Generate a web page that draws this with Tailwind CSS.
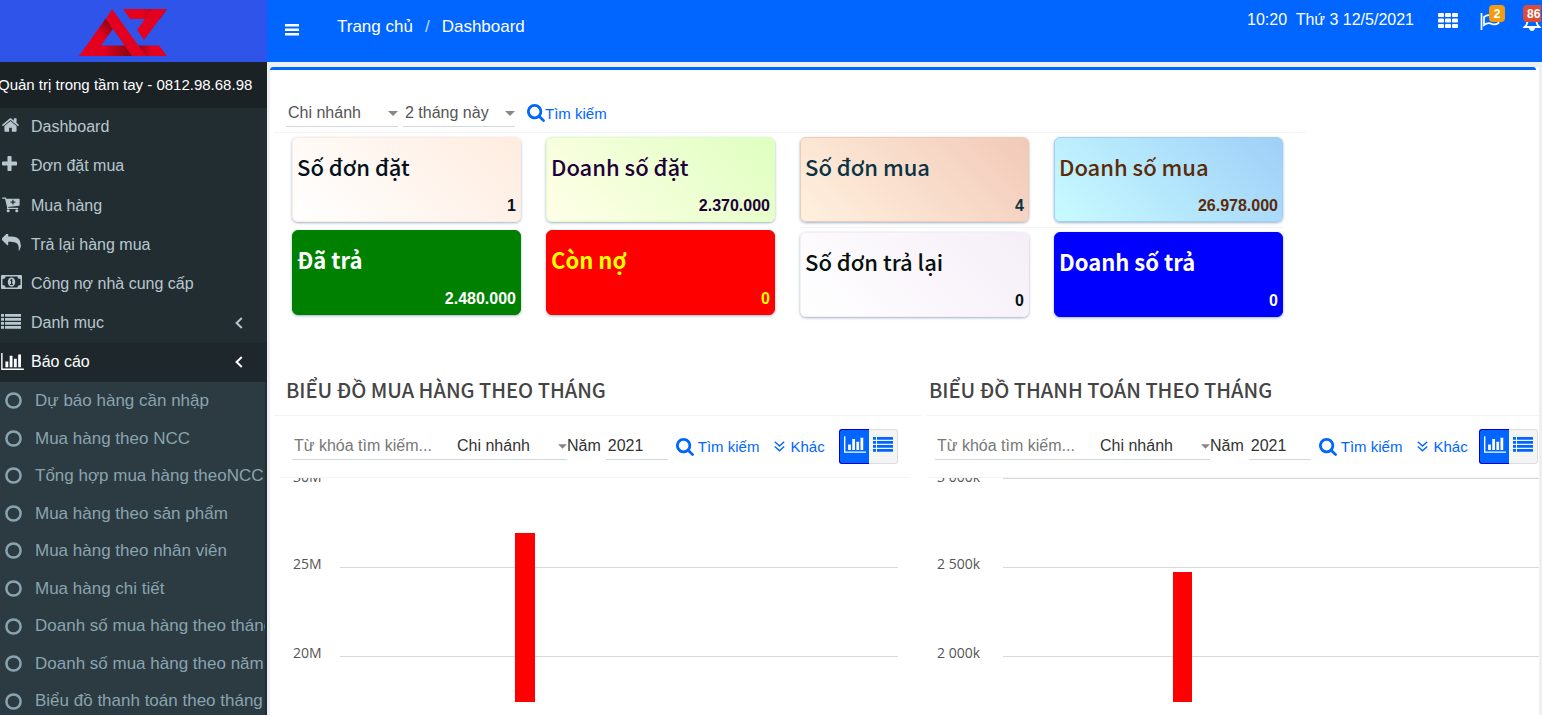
<!DOCTYPE html>
<html lang="vi">
<head>
<meta charset="utf-8">
<meta name="viewport" content="width=device-width, initial-scale=1">
<title>Dashboard</title>
<script src="https://cdn.jsdelivr.net/npm/@tailwindcss/browser@4"></script>
</head>
<body class="flex h-screen flex-col overflow-hidden bg-white font-['Liberation_Sans',Arial,sans-serif] text-base text-[#444]">

<svg class="hidden" aria-hidden="true">
  <symbol id="i-bars" viewBox="0 0 14 13"><path d="M0 1h14v2.500H0zM0 5.500h14V8H0zM0 10h14v2.500H0z" fill="currentColor"/></symbol>
  <symbol id="i-home" viewBox="90 250 1612 1290"><path fill="currentColor" d="M1472 992v480q0 26-19 45t-45 19h-384v-384h-256v384h-384q-26 0-45-19t-19-45v-480q0-1 .5-3t.5-3l575-474 575 474q1 2 1 6zm223-69l-62 74q-8 9-21 11h-3q-13 0-21-7l-692-577-692 577q-12 8-24 7-13-2-21-11l-62-74q-8-10-7-23.500t11-21.500l719-599q32-26 76-26t76 26l244 204v-195q0-14 9-23t23-9h192q14 0 23 9t9 23v408l219 182q10 8 11 21.500t-7 23.500z"/></symbol>
  <symbol id="i-plus" viewBox="192 128 1408 1408"><path fill="currentColor" d="M1600 736v192q0 40-28 68t-68 28h-416v416q0 40-28 68t-68 28h-192q-40 0-68-28t-28-68v-416h-416q-40 0-68-28t-28-68v-192q0-40 28-68t68-28h416v-416q0-40 28-68t68-28h192q40 0 68 28t28 68v416h416q40 0 68 28t28 68z"/></symbol>
  <symbol id="i-cart" viewBox="0 0 19 16"><path fill="currentColor" fill-rule="evenodd" d="M.6 0H3.600q.8 0 1 1.300H18q.6 0 .6.700v6q0 .6-.6.700L6.500 10l.2 1H16.500q.7 0 .7.700t-.7.600H5.800q-.8 0-.7-.8l.3-.9L3.200 1.500H.6Q0 1.500 0 .750T.6 0zM10.900 2.500v1.900H9v1.300h1.900v1.900h1.300V5.700h1.900V4.400h-1.900V2.500z"/><circle cx="6.500" cy="14" r="1.600" fill="currentColor"/><circle cx="15.600" cy="14" r="1.600" fill="currentColor"/></symbol>
  <symbol id="i-reply" viewBox="0 128 1792 1536"><path fill="currentColor" d="M1792 1120q0 166-127 451-3 7-10.500 24t-13.500 30-13 22q-12 17-28 17-15 0-23.500-10t-8.500-25q0-9 2.500-26.500t2.500-23.500q5-68 5-123 0-112-19.500-200.500t-54-153.500-89-112-117.500-77.500-146-47.500-159-22.500-182.500-6.500h-224v256q0 26-19 45t-45 19-45-19l-512-512q-19-19-19-45t19-45l512-512q19-19 45-19t45 19 19 45v256h224q713 0 875 403 53 134 53 333z"/></symbol>
  <symbol id="i-money" viewBox="0 0 21 14"><path fill="currentColor" fill-rule="evenodd" d="M1 0h19q1 0 1 1v12q0 1-1 1H1q-1 0-1-1V1q0-1 1-1zM4.500 1.500q0 2.500-3 2.500v6q3 0 3 2.500h12q0-2.500 3-2.500V4q-3 0-3-2.500z"/><ellipse cx="10.500" cy="7" rx="3.700" ry="4.600" fill="currentColor"/><path d="M9 5.300l1.300-1.200h1V9H12v1H9V9h1V5.700l-.6.400z" fill="#222d32"/></symbol>
  <symbol id="i-list" viewBox="0 0 20 15"><path fill="currentColor" d="M0 0h3v2.700H0zM4 0h16v2.700H4zM0 4h3v2.700H0zM4 4h16v2.700H4zM0 8h3v2.700H0zM4 8h16v2.700H4zM0 12h3v2.700H0zM4 12h16v2.700H4z"/></symbol>
  <symbol id="i-chart" viewBox="0 128 2048 1536"><path fill="currentColor" d="M640 896v512h-256v-512h256zm384-512v1024h-256v-1024h256zm1024 1152v128h-2048v-1536h128v1408h1920zm-640-896v768h-256v-768h256zm384-384v1152h-256v-1152h256z"/></symbol>
  <symbol id="i-left" viewBox="0 0 8 12"><path d="M6.800 1 1.600 6l5.200 5" fill="none" stroke="currentColor" stroke-width="2"/></symbol>
  <symbol id="i-circle" viewBox="0 0 17 17"><circle cx="8.500" cy="8.500" r="7.100" fill="none" stroke="currentColor" stroke-width="2.500"/></symbol>
  <symbol id="i-search" viewBox="64 128 1664 1664"><path fill="currentColor" d="M1216 832q0-185-131.500-316.500t-316.500-131.500-316.500 131.500-131.500 316.500 131.500 316.500 316.500 131.500 316.500-131.500 131.500-316.500zm512 832q0 52-38 90t-90 38q-54 0-90-38l-343-342q-179 124-399 124-143 0-273.500-55.500t-225-150-150-225-55.500-273.500 55.500-273.500 150-225 225-150 273.500-55.500 273.500 55.500 225 150 150 225 55.500 273.500q0 220-124 399l343 343q37 37 37 90z"/></symbol>
  <symbol id="i-down2" viewBox="0 0 11 11"><path d="M.8.8 5.500 5 10.200.800M.8 5.600l4.700 4.200 4.700-4.200" fill="none" stroke="currentColor" stroke-width="1.400"/></symbol>
  <symbol id="i-caret" viewBox="0 0 10 5"><path d="M0 0h10L5 5z" fill="#888"/></symbol>
  <symbol id="i-th" viewBox="0 0 20 15"><path fill="currentColor" d="M1 0h4q1 0 1 1v2q0 1-1 1H1Q0 4 0 3V1q0-1 1-1zM8 0h4q1 0 1 1v2q0 1-1 1H8Q7 4 7 3V1q0-1 1-1zM15 0h4q1 0 1 1v2q0 1-1 1h-4q-1 0-1-1V1q0-1 1-1zM1 5.500h4q1 0 1 1v2q0 1-1 1H1q-1 0-1-1v-2q0-1 1-1zM8 5.500h4q1 0 1 1v2q0 1-1 1H8q-1 0-1-1v-2q0-1 1-1zM15 5.500h4q1 0 1 1v2q0 1-1 1h-4q-1 0-1-1v-2q0-1 1-1zM1 11h4q1 0 1 1v2q0 1-1 1H1q-1 0-1-1v-2q0-1 1-1zM8 11h4q1 0 1 1v2q0 1-1 1H8q-1 0-1-1v-2q0-1 1-1zM15 11h4q1 0 1 1v2q0 1-1 1h-4q-1 0-1-1v-2q0-1 1-1z"/></symbol>
</svg>

<header class="flex h-[62px] shrink-0 bg-[#0066ff] text-white">
  <a href="#" aria-label="AZ" class="flex w-[267px] shrink-0 justify-center bg-[#2e54ea] pt-2">
    <svg class="ml-[-21px] h-12 w-[88px]" viewBox="0 0 88 48">
      <defs>
        <linearGradient id="g1" x1="0" y1="1" x2="1" y2="0"><stop offset=".6" stop-color="#e4001f"/><stop offset=".95" stop-color="#7d0614"/></linearGradient>
        <linearGradient id="g2"><stop offset="0" stop-color="#e4001f"/><stop offset=".45" stop-color="#e4001f"/><stop offset="1" stop-color="#7d0614"/></linearGradient>
        <linearGradient id="g3"><stop offset="0" stop-color="#7d0614"/><stop offset=".5" stop-color="#e4001f"/></linearGradient>
      </defs>
      <path d="M44 1h44l-7 10H51z" fill="url(#g2)"/>
      <path d="M73 1h15L65 32l-7-10z" fill="#e4001f"/>
      <path d="M0 48 27 10l7 11-12 16.500V48z" fill="url(#g1)"/>
      <path d="M8 37.500h46V48H0z" fill="url(#g2)"/>
      <path d="M56 37.500h24L88 48H64z" fill="url(#g3)"/>
      <path d="M33 1 67 48H53L27 11z" fill="#e4001f"/>
    </svg>
  </a>
  <button type="button" aria-label="Menu" class="ml-[18px] flex h-full items-center pb-1"><svg class="h-[13px] w-[14px]"><use href="#i-bars"/></svg></button>
  <nav class="ml-[38px] flex gap-3 pt-4 text-[17px] leading-[22px]">
    <a href="#">Trang chủ</a><span class="text-blue-200">/</span><a href="#">Dashboard</a>
  </nav>
  <div class="mr-px ml-auto flex pt-[9px]">
    <span class="leading-[22px] whitespace-pre">10:20  Thứ 3 12/5/2021</span>
    <button type="button" aria-label="Ứng dụng" class="ml-6 flex pt-1"><svg class="h-[15px] w-5"><use href="#i-th"/></svg></button>
    <button type="button" aria-label="Cờ" class="relative ml-[22px] flex w-5 pt-1">
      <svg class="h-[17px] w-5" viewBox="0 0 20 17" fill="none" stroke="currentColor" stroke-width="1.700"><path d="M1.500 0v17M4 4q4-3 7.500-1t7-1v8q-3.500 2.500-7 .7T4 12z"/></svg>
      <span class="absolute top-[-4px] left-[9px] flex h-[17px] w-4 items-center justify-center rounded-sm bg-[#f39c12] text-xs font-bold">2</span>
    </button>
    <button type="button" aria-label="Thông báo" class="relative ml-[23px] flex w-[18px] pt-1">
      <svg class="h-[18px] w-[18px]" viewBox="0 0 18 18"><path d="M9 1Q4.500 2 4.500 7T1.500 14h15q-3-2-3-7T9 1z" fill="none" stroke="currentColor" stroke-width="1.800"/><path d="M6 15h6q-.5 3-3 3t-3-3z" fill="currentColor"/></svg>
      <span class="absolute top-[-4px] left-0 flex h-[17px] w-[18px] items-center rounded-l-sm bg-[#dd4b39] pl-1 text-xs font-bold">86</span>
    </button>
  </div>
</header>

<div class="flex min-h-0 flex-1">
  <aside class="w-[267px] shrink-0 overflow-hidden bg-[#222d32] text-[#b8c7ce]">
    <p class="h-[46px] bg-[#1a2226] text-[15px] leading-[46px] whitespace-nowrap text-white"><span class="-ml-0.5">Quản trị trong tầm tay - 0812.98.68.98</span></p>
    <ul class="grid h-[274px] grid-rows-7">
      <li class="grid"><a href="#" class="flex items-center pb-0.5"><span class="w-[31px] pb-1 pl-0.5"><svg class="h-[14px] w-[17px]"><use href="#i-home"/></svg></span>Dashboard</a></li>
      <li class="grid"><a href="#" class="flex items-center pb-0.5"><span class="w-[31px] pb-1 pl-0.5"><svg class="h-[15px] w-[15px]"><use href="#i-plus"/></svg></span>Đơn đặt mua</a></li>
      <li class="grid"><a href="#" class="flex items-center"><span class="w-[31px] pb-0.5 pl-0.5"><svg class="h-[16px] w-[18px]"><use href="#i-cart"/></svg></span>Mua hàng</a></li>
      <li class="grid"><a href="#" class="flex items-center"><span class="w-[31px] pb-1 pl-0.5"><svg class="h-[17px] w-[19px]"><use href="#i-reply"/></svg></span>Trả lại hàng mua</a></li>
      <li class="grid"><a href="#" class="flex items-center"><span class="w-[31px] pb-1 pl-px"><svg class="h-[14px] w-[21px]"><use href="#i-money"/></svg></span>Công nợ nhà cung cấp</a></li>
      <li class="grid"><a href="#" class="flex items-center pr-6"><span class="w-[31px] pb-1 pl-px"><svg class="h-[15px] w-5"><use href="#i-list"/></svg></span>Danh mục<svg class="ml-auto h-3 w-2"><use href="#i-left"/></svg></a></li>
      <li class="grid bg-[#1e282c] text-white"><a href="#" class="flex items-center pr-6"><span class="w-[31px] pb-0.5 pl-px"><svg class="h-[17px] w-[23px]"><use href="#i-chart"/></svg></span>Báo cáo<svg class="ml-auto h-3 w-2"><use href="#i-left"/></svg></a></li>
    </ul>
    <ul class="mr-0.5 grid h-[338px] grid-rows-9 overflow-hidden bg-[#2c3b41] text-[17px] whitespace-nowrap text-[#8aa4af]">
      <li class="grid"><a href="#" class="flex items-center gap-[13px] pl-[5px]"><svg class="size-[17px] shrink-0"><use href="#i-circle"/></svg>Dự báo hàng cần nhập</a></li>
      <li class="grid"><a href="#" class="flex items-center gap-[13px] pl-[5px]"><svg class="size-[17px] shrink-0"><use href="#i-circle"/></svg>Mua hàng theo NCC</a></li>
      <li class="grid"><a href="#" class="flex items-center gap-[13px] pl-[5px]"><svg class="size-[17px] shrink-0"><use href="#i-circle"/></svg>Tổng hợp mua hàng theoNCC</a></li>
      <li class="grid"><a href="#" class="flex items-center gap-[13px] pl-[5px]"><svg class="size-[17px] shrink-0"><use href="#i-circle"/></svg>Mua hàng theo sản phẩm</a></li>
      <li class="grid"><a href="#" class="flex items-center gap-[13px] pl-[5px]"><svg class="size-[17px] shrink-0"><use href="#i-circle"/></svg>Mua hàng theo nhân viên</a></li>
      <li class="grid"><a href="#" class="flex items-center gap-[13px] pl-[5px]"><svg class="size-[17px] shrink-0"><use href="#i-circle"/></svg>Mua hàng chi tiết</a></li>
      <li class="grid"><a href="#" class="flex items-center gap-[13px] pl-[5px]"><svg class="size-[17px] shrink-0"><use href="#i-circle"/></svg>Doanh số mua hàng theo tháng</a></li>
      <li class="grid"><a href="#" class="flex items-center gap-[13px] pl-[5px]"><svg class="size-[17px] shrink-0"><use href="#i-circle"/></svg>Doanh số mua hàng theo năm</a></li>
      <li class="grid"><a href="#" class="flex items-center gap-[13px] pl-[5px]"><svg class="size-[17px] shrink-0"><use href="#i-circle"/></svg>Biểu đồ thanh toán theo tháng</a></li>
    </ul>
  </aside>

  <main class="min-w-0 flex-1 overflow-hidden bg-[#ecf0f5] pt-[5px] pr-[3px] pl-[3px]">
    <div class="h-full bg-white">
      <div class="mr-[3px] h-[3px] rounded-t-[3px] bg-[#0066ff]"></div>

      <form class="ml-1 flex h-[63px] max-w-[1032px] items-end border-b border-[#f4f4f4] pb-[5px] pl-3">
        <div class="relative flex h-7 w-28 items-center border-b border-[#d2d6de]">
          <select aria-label="Chi nhánh" class="w-full appearance-none pl-0.5 text-base text-[#555]"><option>Chi nhánh</option></select>
          <svg class="pointer-events-none absolute top-3 right-0 h-[5px] w-[10px]"><use href="#i-caret"/></svg>
        </div>
        <div class="relative ml-[5px] flex h-7 w-28 items-center border-b border-[#d2d6de]">
          <select aria-label="Khoảng thời gian" class="w-full appearance-none pl-0.5 text-base text-[#555]"><option>2 tháng này</option></select>
          <svg class="pointer-events-none absolute top-3 right-0 h-[5px] w-[10px]"><use href="#i-caret"/></svg>
        </div>
        <button type="button" class="ml-3 flex h-7 items-center text-[15px] text-[#0066ff]"><svg class="size-[18px]"><use href="#i-search"/></svg><span class="pt-0.5">Tìm kiếm</span></button>
      </form>

      <section class="ml-[22px] flex max-w-[991px] gap-[25px] pt-1 font-['Noto_Sans_CJK_SC','Noto_Sans',sans-serif]">
        <div class="grid flex-1 grid-cols-2 content-start gap-x-[25px] gap-y-2">
          <article class="flex h-[85px] flex-col justify-between rounded-md border border-[#ffecdf] bg-linear-45 from-white to-[#ffecdf] px-1 pt-3 pb-[5px] text-[#04111d] shadow-sm shadow-slate-400/70">
            <h3 class="text-[22px] leading-8 font-medium">Số đơn đặt</h3><p class="text-right font-['Liberation_Sans',sans-serif] text-base leading-5 font-bold">1</p></article>
          <article class="flex h-[85px] flex-col justify-between rounded-md border border-[#dfffc0] bg-linear-45 from-[#ffffe8] to-[#dfffc0] px-1 pt-3 pb-[5px] text-[#20003a] shadow-sm shadow-slate-400/70">
            <h3 class="text-[22px] leading-8 font-medium">Doanh số đặt</h3><p class="text-right font-['Liberation_Sans',sans-serif] text-base leading-5 font-bold">2.370.000</p></article>
          <article class="flex h-[85px] flex-col justify-between rounded-md border border-[#008000] bg-[#008000] px-1 pt-3 pb-[5px] text-white shadow-sm shadow-slate-400/70">
            <h3 class="text-[22px] leading-8 font-bold">Đã trả</h3><p class="text-right font-['Liberation_Sans',sans-serif] text-base leading-5 font-bold">2.480.000</p></article>
          <article class="flex h-[85px] flex-col justify-between rounded-md border border-[#ff0000] bg-[#ff0000] px-1 pt-3 pb-[5px] text-[#ffff00] shadow-sm shadow-slate-400/70">
            <h3 class="text-[22px] leading-8 font-bold">Còn nợ</h3><p class="text-right font-['Liberation_Sans',sans-serif] text-base leading-5 font-bold">0</p></article>
        </div>
        <div class="grid flex-1 grid-cols-2 content-start gap-x-[25px] gap-y-[5px]">
          <article class="flex h-[85px] flex-col justify-between rounded-md border border-[#f2c9b8] bg-linear-45 from-[#fff1df] to-[#f2c9b8] px-1 pt-3 pb-[5px] text-[#0c3344] shadow-sm shadow-slate-400/70">
            <h3 class="text-[22px] leading-8 font-medium">Số đơn mua</h3><p class="text-right font-['Liberation_Sans',sans-serif] text-base leading-5 font-bold">4</p></article>
          <article class="flex h-[85px] flex-col justify-between rounded-md border border-[#9fcff8] bg-linear-45 from-[#c8fbff] to-[#9fcff8] px-1 pt-3 pb-[5px] text-[#5b2a08] shadow-sm shadow-slate-400/70">
            <h3 class="text-[22px] leading-8 font-medium">Doanh số mua</h3><p class="text-right font-['Liberation_Sans',sans-serif] text-base leading-5 font-bold">26.978.000</p></article>
          <hr class="col-span-2 -mb-px border-[#f4f4f4]">
          <article class="flex h-[85px] flex-col justify-between rounded-md border border-[#f5eef8] bg-linear-45 from-white to-[#f5eef8] px-1 pt-3 pb-[5px] text-[#06100c] shadow-sm shadow-slate-400/70">
            <h3 class="text-[22px] leading-8 font-medium">Số đơn trả lại</h3><p class="text-right font-['Liberation_Sans',sans-serif] text-base leading-5 font-bold">0</p></article>
          <article class="flex h-[85px] flex-col justify-between rounded-md border border-[#0000ff] bg-[#0000ff] px-1 pt-3 pb-[5px] text-white shadow-sm shadow-slate-400/70">
            <h3 class="text-[22px] leading-8 font-bold">Doanh số trả</h3><p class="text-right font-['Liberation_Sans',sans-serif] text-base leading-5 font-bold">0</p></article>
        </div>
      </section>

      <div class="mt-[49px] ml-1 grid grid-cols-[648fr_612fr] gap-[5px]">
        <section class="min-w-0">
          <h2 class="h-[50px] border-b border-[#f4f4f4] pt-2 pl-3 font-['Noto_Sans_CJK_SC','Noto_Sans',sans-serif] text-xl leading-8 font-medium whitespace-nowrap">BIỂU ĐỒ MUA HÀNG THEO THÁNG</h2>
          <form class="mr-3 ml-[5px] flex h-[62px] items-center border-b border-[#f4f4f4] pl-[13px] text-[#333]">
            <input aria-label="Từ khóa" placeholder="Từ khóa tìm kiếm..." class="h-[26px] w-[162px] border-b border-[#d2d6de] pl-0.5 placeholder:text-[#777]">
            <div class="relative flex h-[26px] w-[113px] items-center border-b border-[#d2d6de]">
              <select aria-label="Chi nhánh" class="w-full appearance-none pl-[3px]"><option>Chi nhánh</option></select>
              <svg class="pointer-events-none absolute top-2.5 right-0 h-[5px] w-[9px]"><use href="#i-caret"/></svg>
            </div>
            <label for="y1" class="pb-0.5">Năm</label>
            <input id="y1" value="2021" class="ml-[5px] h-[26px] w-[62px] border-b border-[#d2d6de] pl-0.5">
            <button type="button" class="ml-2 flex items-center gap-1 text-[15px] whitespace-nowrap text-[#0066ff]"><svg class="size-[18px]"><use href="#i-search"/></svg><span class="pt-0.5">Tìm kiếm</span></button>
            <button type="button" class="ml-[15px] flex items-center gap-[5px] text-[15px] text-[#0066ff]"><svg class="size-[11px]"><use href="#i-down2"/></svg><span class="pt-0.5">Khác</span></button>
            <div class="ml-auto flex shrink-0">
              <button type="button" aria-label="Biểu đồ" class="flex h-[35px] w-[30px] items-center justify-center rounded-l-[3px] border border-r-0 border-[#0000dd] bg-[#0066ff] pb-1 text-white"><svg class="h-[17px] w-[22px]"><use href="#i-chart"/></svg></button>
              <button type="button" aria-label="Danh sách" class="mr-3 flex h-[35px] w-[29px] items-center justify-center rounded-r-[3px] border border-l-0 border-[#ddd] bg-[#f4f4f4] pb-1 text-[#0066ff]"><svg class="h-[15px] w-5"><use href="#i-list"/></svg></button>
            </div>
          </form>
          <svg class="block h-[224px] w-full pr-6" role="img" aria-label="Biểu đồ mua hàng theo tháng">
            <g fill="#555" font-family="Open Sans, Noto Sans, sans-serif" font-size="14"><text x="19" y="4">30M</text><text x="19" y="91">25M</text><text x="19" y="180">20M</text></g>
            <g stroke="#d8d8d8"><path d="M66 89.500h558M66 178.500h558"/></g>
            <rect x="241" y="55" width="20" height="169" fill="#f00"/>
          </svg>
        </section>
        <section class="min-w-0">
          <h2 class="h-[50px] border-b border-[#f4f4f4] pt-2 pl-0.5 font-['Noto_Sans_CJK_SC','Noto_Sans',sans-serif] text-xl leading-8 font-medium whitespace-nowrap">BIỂU ĐỒ THANH TOÁN THEO THÁNG</h2>
          <form class="flex h-[62px] items-center border-b border-[#f4f4f4] pl-2 text-[#333]">
            <input aria-label="Từ khóa" placeholder="Từ khóa tìm kiếm..." class="h-[26px] w-[162px] border-b border-[#d2d6de] pl-0.5 placeholder:text-[#777]">
            <div class="relative flex h-[26px] w-[113px] items-center border-b border-[#d2d6de]">
              <select aria-label="Chi nhánh" class="w-full appearance-none pl-[3px]"><option>Chi nhánh</option></select>
              <svg class="pointer-events-none absolute top-2.5 right-0 h-[5px] w-[9px]"><use href="#i-caret"/></svg>
            </div>
            <label for="y2" class="pb-0.5">Năm</label>
            <input id="y2" value="2021" class="ml-[5px] h-[26px] w-[62px] border-b border-[#d2d6de] pl-0.5">
            <button type="button" class="ml-2 flex items-center gap-1 text-[15px] whitespace-nowrap text-[#0066ff]"><svg class="size-[18px]"><use href="#i-search"/></svg><span class="pt-0.5">Tìm kiếm</span></button>
            <button type="button" class="ml-[15px] flex items-center gap-[5px] text-[15px] text-[#0066ff]"><svg class="size-[11px]"><use href="#i-down2"/></svg><span class="pt-0.5">Khác</span></button>
            <div class="ml-auto flex shrink-0 pr-px">
              <button type="button" aria-label="Biểu đồ" class="flex h-[35px] w-[30px] items-center justify-center rounded-l-[3px] border border-r-0 border-[#0000dd] bg-[#0066ff] pb-1 text-white"><svg class="h-[17px] w-[22px]"><use href="#i-chart"/></svg></button>
              <button type="button" aria-label="Danh sách" class="flex h-[35px] w-[29px] items-center justify-center rounded-r-[3px] border border-l-0 border-[#ddd] bg-[#f4f4f4] pb-1 text-[#0066ff]"><svg class="h-[15px] w-5"><use href="#i-list"/></svg></button>
            </div>
          </form>
          <svg class="block h-[224px] w-full" role="img" aria-label="Biểu đồ thanh toán theo tháng">
            <g fill="#555" font-family="Open Sans, Noto Sans, sans-serif" font-size="14"><text x="10" y="4">3 000k</text><text x="10" y="91">2 500k</text><text x="10" y="180">2 000k</text></g>
            <g stroke="#d8d8d8"><path d="M76 .5h536M76 89.500h536M76 178.500h536"/></g>
            <rect x="246" y="94" width="19" height="130" fill="#f00"/>
          </svg>
        </section>
      </div>
    </div>
  </main>
</div>
</body>
</html>
